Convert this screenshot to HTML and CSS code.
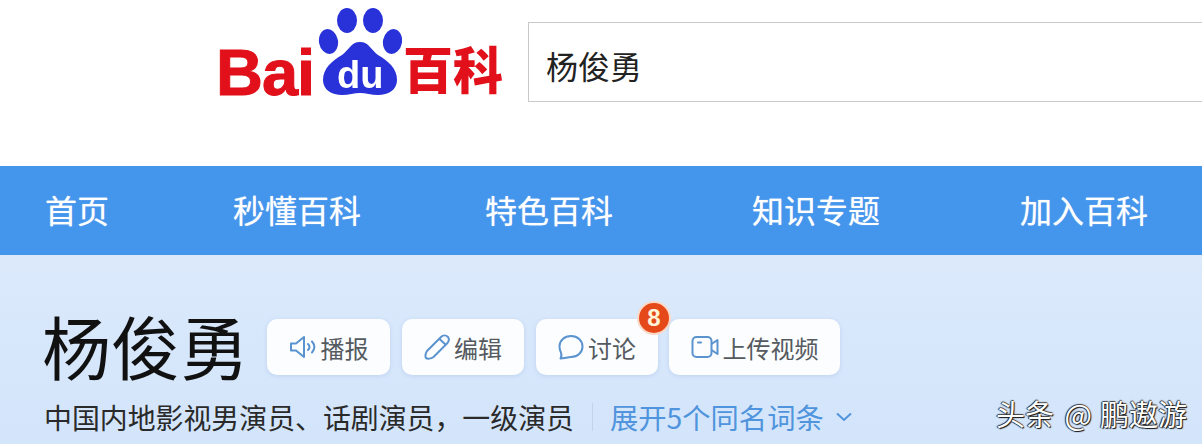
FILE: index.html
```html
<!DOCTYPE html>
<html lang="zh-CN">
<head>
    <meta charset="UTF-8">
    <title>杨俊勇 百度百科</title>
    <link rel="stylesheet" href="styles.css">
</head>
<body>
    <div class="page">
        <div class="header">
            <div class="logo">
                <span class="logo-bai">Bai</span>
                <div class="paw">
                    <svg width="84" height="96" viewBox="0 0 84 96">
                        <ellipse cx="29" cy="13.500" rx="10" ry="12.500" fill="#2932d9"/>
                        <ellipse cx="55" cy="13.500" rx="10" ry="12.500" fill="#2932d9"/>
                        <ellipse cx="10.500" cy="34.500" rx="9.500" ry="12.500" transform="rotate(-10 10.500 34.500)" fill="#2932d9"/>
                        <ellipse cx="74.500" cy="34.500" rx="9.500" ry="12.500" transform="rotate(10 74.500 34.500)" fill="#2932d9"/>
                        <path d="M42 35C33 35 31 43 24 48C14 54 5 61 5 73C5 83 14 88 24 88C31 88 36 86 42 86C48 86 53 88 60 88C70 88 79 83 79 73C79 61 70 54 60 48C53 43 51 35 42 35Z" fill="#2932d9"/>
                    </svg>
                    <span class="paw-du">du</span>
                </div>
                <span class="logo-baike">百科</span>
            </div>
            <div class="search">杨俊勇</div>
        </div>

        <div class="nav">
            <a class="nav-item">首页</a>
            <a class="nav-item">秒懂百科</a>
            <a class="nav-item">特色百科</a>
            <a class="nav-item">知识专题</a>
            <a class="nav-item">加入百科</a>
        </div>

        <div class="content">
            <div class="title-row">
                <h1>杨俊勇</h1>
                <div class="btn btn-first">
                    <svg width="28" height="26" viewBox="0 0 28 26" fill="none" stroke="#5b93cf" stroke-width="2">
                        <path d="M2 9.500H7L15 3V23L7 16.500H2Z" stroke-linejoin="round"/>
                        <path d="M19 10C21 12 21 14 19 16M23 7.500C26 11 26 15 23 18.500" stroke-linecap="round"/>
                    </svg>
                    播报
                </div>
                <div class="btn">
                    <svg width="26" height="26" viewBox="0 0 26 26" fill="none" stroke="#5b93cf" stroke-width="2">
                        <path d="M3 17L17 3C19 1 22 1 24 3C25.500 5 25 7 23.500 9L9.500 23C7 25 3 25 2 24C1 22.500 1.500 19 3 17Z" stroke-linejoin="round"/>
                        <path d="M15.500 5L22 11"/>
                    </svg>
                    编辑
                </div>
                <div class="btn btn-talk">
                    <svg width="26" height="26" viewBox="0 0 26 26" fill="none" stroke="#5b93cf" stroke-width="2">
                        <path d="M13 2C19.500 2 24.500 6.500 24.500 12.500C24.500 18.500 19.500 23 13 23C10 23 6 24.500 2.500 24.500C4 22.500 3.500 20 2.800 18C1.800 16.500 1.500 14.500 1.500 12.500C1.500 6.500 6.500 2 13 2Z" stroke-linejoin="round"/>
                    </svg>
                    讨论
                    <span class="badge">8</span>
                </div>
                <div class="btn btn-long">
                    <svg width="28" height="24" viewBox="0 0 28 24" fill="none" stroke="#5b93cf" stroke-width="2">
                        <rect x="1.500" y="2" width="19" height="20" rx="4"/>
                        <path d="M20.500 9L26.500 5V19L20.500 15" stroke-linejoin="round"/>
                        <path d="M7 7.500H10" stroke-linecap="round"/>
                    </svg>
                    上传视频
                </div>
            </div>
            <div class="desc-row">
                <span class="desc">中国内地影视男演员、话剧演员，一级演员</span>
                <span class="more">展开5个同名词条
                    <svg width="18" height="10" viewBox="0 0 18 10" fill="none" stroke="#4f94dc" stroke-width="2"><path d="M2 1.500L9 8L16 1.500"/></svg>
                </span>
            </div>
        </div>
        <div class="watermark">头条 <span class="watermark-at">@</span>鹏遨游</div>
    </div>
</body>
</html>
```

FILE: styles.css
```css
* {
    box-sizing: border-box;
}

body {
    margin: 0;
    font-family: "Noto Sans CJK SC", "Liberation Sans", sans-serif;
}

.page {
    width: 1202px;
    height: 444px;
    overflow: hidden;
    position: relative;
    background-color: #ffffff;
}

.header {
    height: 166px;
    padding: 22px 0 0 218px;
    display: flex;
    align-items: flex-start;
}

.logo {
    width: 310px;
    height: 96px;
    margin-top: -15px;
    display: flex;
    align-items: flex-end;
    color: #e1101a;
    filter: blur(0.5px);
}

.logo-bai {
    width: 100px;
    margin-left: -2px;
    margin-right: 2px;
    font-family: "Liberation Sans", sans-serif;
    font-size: 65px;
    font-weight: bold;
    line-height: 61px;
    letter-spacing: -1px;
    -webkit-text-stroke: 1px #e1101a;
    white-space: nowrap;
}

.paw {
    width: 84px;
    height: 96px;
    position: relative;
}

.paw svg {
    display: block;
}

.paw-du {
    position: absolute;
    left: 19px;
    top: 48px;
    font-family: "Liberation Sans", sans-serif;
    font-size: 38px;
    font-weight: bold;
    line-height: 40px;
    color: #ffffff;
}

.logo-baike {
    margin-left: 1px;
    font-size: 50px;
    font-weight: 900;
    line-height: 72px;
    white-space: nowrap;
}

.search {
    flex: 1;
    height: 80px;
    padding-left: 17px;
    border: 1px solid #c9c9c9;
    border-right: none;
    font-size: 32px;
    line-height: 84px;
    color: #222222;
}

.nav {
    height: 89px;
    padding: 0 0 3px 45px;
    display: grid;
    grid-template-columns: 188px 252px 267px 268px auto;
    align-items: center;
    background-color: #4495ec;
}

.nav-item {
    font-size: 32px;
    color: #ffffff;
    text-shadow: 0 0 1px rgba(255, 255, 255, 0.7);
    white-space: nowrap;
}

.content {
    height: 189px;
    padding: 56px 0 0 42px;
    background: linear-gradient(#dbe9fb, #d3e5fb);
}

.title-row {
    display: flex;
    align-items: center;
    height: 72px;
}

.title-row h1 {
    width: 225px;
    margin: -4px 0 0;
    font-size: 69px;
    font-weight: 400;
    line-height: 72px;
    color: #111111;
    white-space: nowrap;
}

.btn {
    width: 122px;
    height: 56px;
    margin-right: 12px;
    position: relative;
    display: flex;
    align-items: center;
    justify-content: center;
    gap: 4px;
    background-color: #fbfdff;
    border-radius: 10px;
    box-shadow: 0 1px 4px rgba(90, 130, 190, 0.18);
    font-size: 24px;
    color: #555a60;
    white-space: nowrap;
}

.btn-first {
    width: 123px;
}

.btn-talk {
    margin-right: 11px;
}

.btn-long {
    width: 171px;
}

.badge {
    position: absolute;
    top: -18px;
    right: -13px;
    width: 34px;
    height: 34px;
    border: 2px solid #fbd9c8;
    border-radius: 50%;
    background-color: #e5491a;
    color: #fff3d8;
    font-family: "Liberation Sans", sans-serif;
    font-size: 24px;
    font-weight: bold;
    line-height: 30px;
    text-align: center;
}

.desc-row {
    margin-top: 13px;
    display: flex;
    align-items: center;
    white-space: nowrap;
}

.desc {
    margin-left: 2px;
    font-size: 27.900px;
    line-height: 42px;
    color: #2a2a2a;
}

.more {
    margin-left: 18px;
    padding-left: 17px;
    border-left: 1px solid #c2d4e8;
    display: flex;
    align-items: center;
    gap: 11px;
    font-size: 28.300px;
    line-height: 28px;
    color: #4f94dc;
}

.watermark {
    position: absolute;
    top: 394px;
    left: 996px;
    font-size: 29px;
    line-height: 38px;
    word-spacing: 4px;
    color: #ffffff;
    text-shadow: 1px 1px 1px #111111, -1px 0 1px #222222, 0 -1px 1px #444444;
    white-space: nowrap;
}

.watermark-at {
    margin-right: 8px;
}
```
